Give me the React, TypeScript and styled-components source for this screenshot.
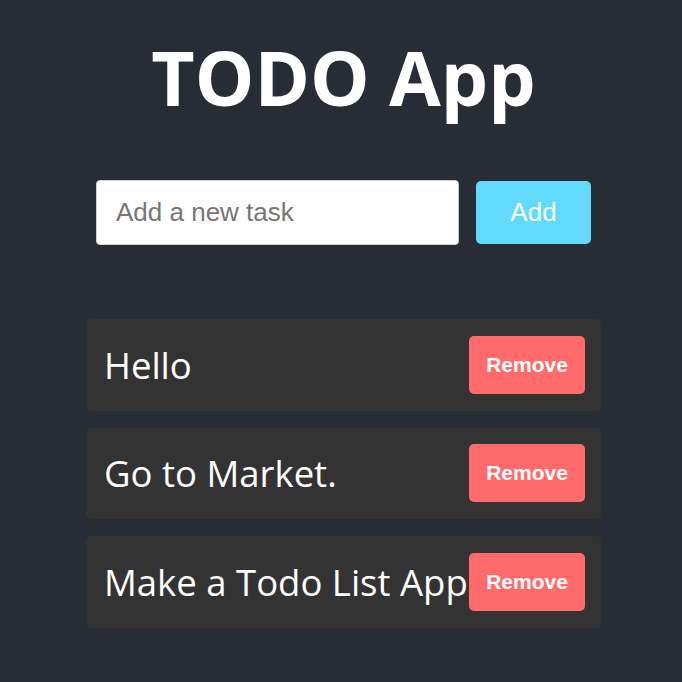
import React from "react";
import styled, { createGlobalStyle } from "styled-components";

const Global = createGlobalStyle`
  html, body { margin: 0; padding: 0; background: #282c34; }
  body { font-family: "Open Sans", "Noto Sans", sans-serif; }
`;

const Page = styled.div`
  min-height: 682px;
  display: flex;
  flex-direction: column;
  align-items: center;
  padding-left: 5px;
  box-sizing: border-box;
`;

const Title = styled.h1`
  margin: 40px 0 0;
  font-family: "Open Sans", sans-serif;
  font-weight: 700;
  font-size: 75px;
  line-height: 1;
  color: #fff;
`;

const Form = styled.div`
  margin-top: 65px;
  display: flex;
  align-items: center;
  gap: 17px;
`;

const Input = styled.input`
  box-sizing: border-box;
  width: 363px;
  height: 65px;
  padding: 0 19px;
  border: 1px solid #cfcfcf;
  border-radius: 4px;
  background: #fff;
  font-family: "Liberation Sans", Arial, sans-serif;
  font-size: 26px;
  color: #222;
  outline: none;
  &::placeholder { color: #767676; }
`;

const AddButton = styled.button`
  width: 115px;
  height: 63px;
  border: none;
  border-radius: 5px;
  background: #61dafb;
  color: #fff;
  font-family: "Liberation Sans", Arial, sans-serif;
  font-size: 26px;
  cursor: pointer;
`;

const List = styled.ul`
  list-style: none;
  margin: 74px 0 0;
  padding: 0;
  width: 515px;
  display: flex;
  flex-direction: column;
  gap: 17px;
`;

const Item = styled.li`
  box-sizing: border-box;
  height: 91.5px;
  padding: 0 16px 0 18px;
  display: flex;
  align-items: center;
  justify-content: space-between;
  background: #333333;
  border-radius: 5px;
`;

const ItemText = styled.span`
  font-family: "Open Sans", sans-serif;
  font-size: 36.5px;
  color: #fff;
  white-space: nowrap;
`;

const RemoveButton = styled.button`
  flex-shrink: 0;
  width: 116px;
  height: 58px;
  border: none;
  border-radius: 5px;
  background: #ff6b6b;
  color: #fff;
  font-family: "Liberation Sans", Arial, sans-serif;
  font-weight: 700;
  font-size: 21px;
  cursor: pointer;
`;

const todos = ["Hello", "Go to Market.", "Make a Todo List App"];

export default function App() {
  return (
    <>
      <Global />
      <Page>
        <Title>TODO App</Title>
        <Form>
          <Input placeholder="Add a new task" />
          <AddButton>Add</AddButton>
        </Form>
        <List>
          {todos.map((t) => (
            <Item key={t}>
              <ItemText>{t}</ItemText>
              <RemoveButton>Remove</RemoveButton>
            </Item>
          ))}
        </List>
      </Page>
    </>
  );
}
